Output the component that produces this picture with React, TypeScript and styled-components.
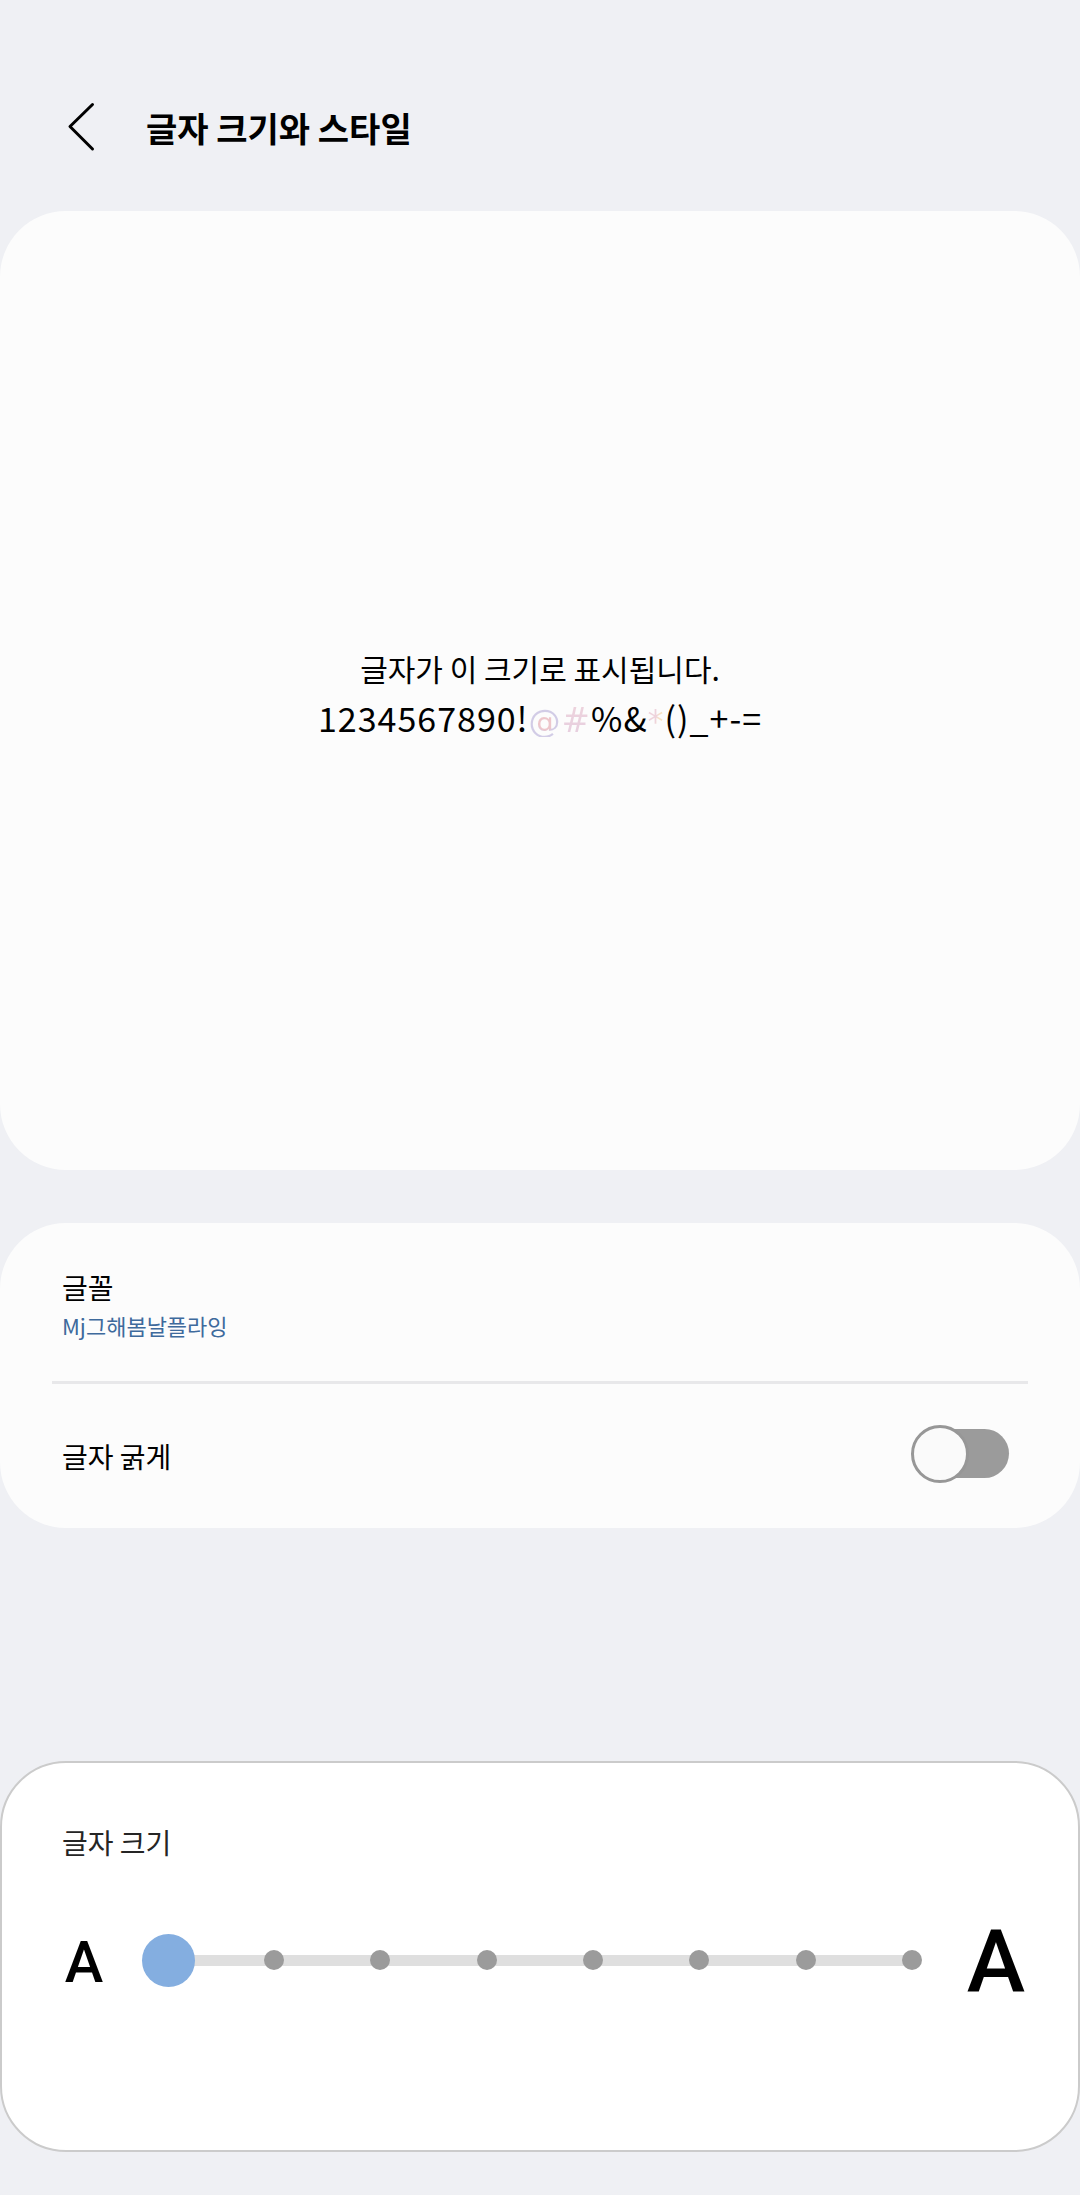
import React from "react";
import styled, { createGlobalStyle } from "styled-components";

const STEPS = 7;

const GlobalStyle = createGlobalStyle`
    html, body {
        margin: 0;
        padding: 0;
        background-color: #eff0f4;
    }

    body {
        font-family: "Noto Sans CJK KR", "Noto Sans", sans-serif;
        color: #000;
    }
`;

export default function App() {
    const dots = Array.from({ length: STEPS }, (_, i) => i);

    return (
        <Page>
            <GlobalStyle />
            <Header>
                <BackButton aria-label="뒤로">
                    <svg width="28" height="50" viewBox="0 0 28 50" fill="none">
                        <path
                            d="M25.5 2.5 L3 24.5 L25.5 47"
                            stroke="#000"
                            strokeWidth="3"
                            strokeLinecap="round"
                            strokeLinejoin="round"
                        />
                    </svg>
                </BackButton>
                <Title>글자 크기와 스타일</Title>
            </Header>

            <PreviewCard>
                <PreviewLine $size={30} $spacing={0}>
                    글자가 이 크기로 표시됩니다.
                </PreviewLine>
                <PreviewLine $size={34} $spacing={1}>
                    1234567890!
                    <TintedGlyph
                        $size={32}
                        $tint="radial-gradient(circle at 50% 55%, #edc6cb 30%, #d2cce6 40%)"
                    >
                        @
                    </TintedGlyph>
                    <TintedGlyph
                        $size={34}
                        $tint="linear-gradient(#eed3dc, #e6cfe0)"
                    >
                        #
                    </TintedGlyph>
                    %&amp;
                    <TintedGlyph
                        $size={32}
                        $tint="linear-gradient(100deg, #eed3dc 45%, #f6e2c4 60%)"
                    >
                        *
                    </TintedGlyph>
                    ()_+-=
                </PreviewLine>
            </PreviewCard>

            <SettingsCard>
                <FontRow>
                    <RowLabel>글꼴</RowLabel>
                    <RowValue>Mj그해봄날플라잉</RowValue>
                </FontRow>
                <Divider />
                <ToggleRow>
                    <RowLabel>글자 굵게</RowLabel>
                    <Switch>
                        <SwitchThumb />
                    </Switch>
                </ToggleRow>
            </SettingsCard>

            <SizeCard>
                <SizeTitle>글자 크기</SizeTitle>
                <SliderRow>
                    <SizeLetter $size={58}>A</SizeLetter>
                    <Slider>
                        <SliderThumb />
                        {dots.map((i) => (
                            <SliderDot key={i} />
                        ))}
                    </Slider>
                    <SizeLetter $size={88}>A</SizeLetter>
                </SliderRow>
            </SizeCard>
        </Page>
    );
}

const Page = styled.div`
    width: 1080px;
    height: 2195px;
    overflow: hidden;
    background-color: #eff0f4;
`;

const Header = styled.header`
    height: 211px;
    box-sizing: border-box;
    padding: 45px 0 0 67px;
    display: flex;
    align-items: center;
`;

const BackButton = styled.div`
    width: 28px;
    height: 50px;
    margin-right: 51px;
    margin-top: -2px;
`;

const Title = styled.h1`
    margin: 0;
    font-size: 34px;
    font-weight: 700;
    line-height: 44px;
    white-space: nowrap;
`;

const PreviewCard = styled.section`
    height: 959px;
    box-sizing: border-box;
    padding-top: 5px;
    border-radius: 66px;
    background-color: #fcfcfc;
    display: flex;
    flex-direction: column;
    align-items: center;
    justify-content: center;
`;

const PreviewLine = styled.div<{ $size: number; $spacing: number }>`
    height: 50px;
    font-size: ${(p) => p.$size}px;
    letter-spacing: ${(p) => p.$spacing}px;
    line-height: 50px;
    white-space: nowrap;
`;

const TintedGlyph = styled.span<{ $tint: string; $size: number }>`
    display: inline-block;
    font-family: "DejaVu Sans", sans-serif;
    font-size: ${(p) => p.$size}px;
    line-height: 1;
    background-image: ${(p) => p.$tint};
    -webkit-background-clip: text;
    background-clip: text;
    color: transparent;
`;

const SettingsCard = styled.section`
    height: 305px;
    margin-top: 53px;
    border-radius: 66px;
    background-color: #fcfcfc;
    display: flex;
    flex-direction: column;
`;

const FontRow = styled.div`
    height: 158px;
    box-sizing: border-box;
    padding: 42px 62px 0;
`;

const RowLabel = styled.div`
    font-size: 28px;
    line-height: 44px;
`;

const RowValue = styled.div`
    font-size: 22px;
    line-height: 32px;
    color: #3e6a9c;
`;

const Divider = styled.div`
    height: 3px;
    margin: 0 52px;
    background-color: #e8e8ea;
`;

const ToggleRow = styled.div`
    flex: 1;
    display: flex;
    align-items: center;
    justify-content: space-between;
    padding: 0 71px 0 62px;
`;

const Switch = styled.div`
    position: relative;
    width: 84px;
    height: 49px;
    margin-top: -6px;
    border-radius: 25px;
    background-color: #9b9b9b;
`;

const SwitchThumb = styled.div`
    position: absolute;
    left: -14px;
    top: -4px;
    width: 58px;
    height: 58px;
    box-sizing: border-box;
    border: 3px solid #979797;
    border-radius: 50%;
    background-color: #fafafa;
`;

const SizeCard = styled.section`
    height: 391px;
    margin-top: 233px;
    box-sizing: border-box;
    padding: 57px 0 0 60px;
    border: 2px solid #cbcbcb;
    border-radius: 66px;
    background-color: #fff;
`;

const SizeTitle = styled.div`
    font-size: 28px;
    line-height: 44px;
    color: #252525;
`;

const SliderRow = styled.div`
    height: 100px;
    margin-top: 46px;
    display: flex;
    align-items: center;
`;

const SizeLetter = styled.div<{ $size: number }>`
    width: 44px;
    padding-top: 4px;
    font-family: Roboto, "Liberation Sans", sans-serif;
    font-size: ${(p) => p.$size}px;
    font-weight: 500;
    line-height: 1;
    text-align: center;

    &:last-child {
        width: 60px;
    }
`;

const Slider = styled.div`
    position: relative;
    width: 780px;
    height: 53px;
    margin: 0 44px 0 36px;
    display: flex;
    align-items: center;
    justify-content: space-between;
    padding-left: 122px;
    box-sizing: border-box;

    &::before {
        content: "";
        position: absolute;
        left: 26px;
        right: 10px;
        top: 21px;
        height: 11px;
        background-color: #dfdfdf;
    }
`;

const SliderThumb = styled.div`
    position: absolute;
    left: 0;
    top: 0;
    width: 53px;
    height: 53px;
    border-radius: 50%;
    background-color: #84aee0;
`;

const SliderDot = styled.div`
    position: relative;
    width: 20px;
    height: 20px;
    border-radius: 50%;
    background-color: #9b9b9b;
`;
